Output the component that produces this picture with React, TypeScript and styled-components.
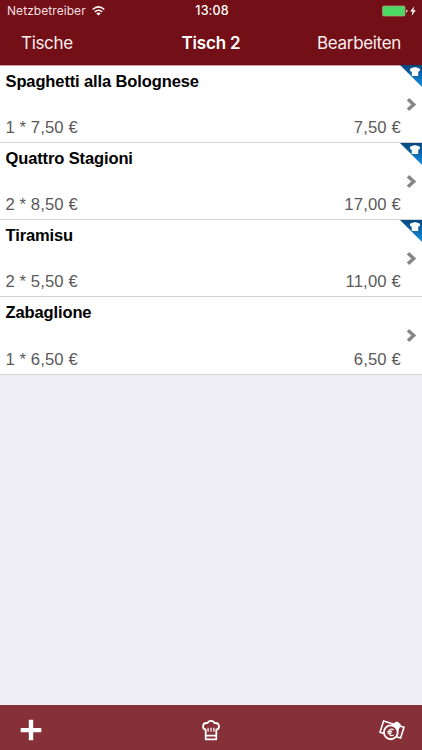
import React from "react";
import styled, { createGlobalStyle } from "styled-components";

const GlobalStyle = createGlobalStyle`
  * { box-sizing: border-box; }
  body { margin: 0; background: #efeff4; }
`;

const Screen = styled.div`
  display: flex;
  flex-direction: column;
  width: 422px;
  height: 750px;
  overflow: hidden;
  background: #efeef4;
  font-family: "Liberation Sans", Arial, sans-serif;
`;

const Header = styled.header`
  height: 66px;
  flex: none;
  border-bottom: 1px solid #d2a0a4;
  background: #730f17;
  color: #fff;
  font-family: Inter, sans-serif;
`;

const StatusBar = styled.div`
  display: grid;
  grid-template-columns: 1fr auto 1fr;
  align-items: center;
  height: 22px;
  padding: 0 5px 0 7px;
  font-size: 12px;
  line-height: 22px;
`;

const Carrier = styled.div`
  display: flex;
  align-items: center;
  gap: 6px;
  color: #f3dfe0;
  letter-spacing: 0.06px;
`;

const Clock = styled.div`
  font-weight: 500;
  font-size: 12.5px;
  letter-spacing: 0.1px;
`;

const Power = styled.div`
  display: flex;
  justify-content: flex-end;
  align-items: center;
`;

const NavBar = styled.nav`
  display: grid;
  grid-template-columns: 1fr auto 1fr;
  height: 43px;
  padding: 0 21px;
  line-height: 43px;
`;

const NavButton = styled.button<{ $end?: boolean }>`
  padding: 0;
  border: 0;
  background: none;
  color: #fbeeee;
  font: inherit;
  font-size: 17px;
  text-align: ${(p) => (p.$end ? "right" : "left")};
  letter-spacing: -0.32px;
`;

const Title = styled.h1`
  margin: 0;
  font-size: 17px;
  font-weight: 600;
  letter-spacing: -0.2px;
`;

const OrderList = styled.ul`
  flex: 1;
  margin: 0;
  padding: 0;
  list-style: none;
`;

const SentBadge = styled.svg`
  position: absolute;
  top: 0;
  right: 0;
`;

const OrderRow = styled.li`
  position: relative;
  display: flex;
  flex-direction: column;
  justify-content: space-between;
  height: 77.15px;
  padding: 6px 21px 5px 5.5px;
  border-bottom: 1px solid #d3d3d6;
  background: #fff;

  &:first-child ${SentBadge} {
    top: -1px;
  }
`;

const Dish = styled.div`
  color: #000;
  font-size: 16.5px;
  font-weight: 700;
  line-height: 19px;
  letter-spacing: -0.12px;
`;

const Amounts = styled.div`
  display: flex;
  justify-content: space-between;
  color: #5a5a5a;
  font-size: 16.7px;
  line-height: 19px;
  letter-spacing: 0.08px;
`;

const Total = styled.span`
  letter-spacing: 0.15px;
`;

const Chevron = styled.svg`
  position: absolute;
  top: 31px;
  right: 5px;
`;

const Toolbar = styled.footer`
  display: grid;
  grid-template-columns: 1fr auto 1fr;
  align-items: center;
  flex: none;
  height: 45px;
  padding: 4px 17px 0 17px;
  background: #863138;
`;

const ToolButton = styled.button<{ $align: string }>`
  display: flex;
  justify-content: ${(p) => p.$align};
  padding: 0;
  border: 0;
  background: none;
`;

const orders = [
  { name: "Spaghetti alla Bolognese", line: "1 * 7,50 €", total: "7,50 €", sent: true },
  { name: "Quattro Stagioni", line: "2 * 8,50 €", total: "17,00 €", sent: true },
  { name: "Tiramisu", line: "2 * 5,50 €", total: "11,00 €", sent: true },
  { name: "Zabaglione", line: "1 * 6,50 €", total: "6,50 €", sent: false },
];

const WifiIcon = () => (
  <svg width="13" height="10" viewBox="0 0 13 10" fill="none" stroke="#fff" strokeWidth="1.6">
    <path d="M.7 3.5Q6.5-1.7 12.3 3.5M2.8 5.9Q6.5 2.6 10.2 5.9" />
    <path d="M6.5 9.6 4.3 7.4Q6.5 5.8 8.7 7.4Z" fill="#fff" stroke="none" />
  </svg>
);

const BatteryIcon = () => (
  <svg width="35" height="12" viewBox="0 0 35 12">
    <rect x=".5" y="1" width="22.5" height="10" rx="1.2" fill="#4cd964" stroke="#a99a78" strokeWidth=".8" />
    <path d="M24 4.4q1.6.1 1.6 1.6T24 7.6z" fill="#e8c9cb" />
    <path d="M32.2 1.2 28.2 6.5h2.3l-.8 4.3 4.1-5.5h-2.4z" fill="#fff" />
  </svg>
);

const Badge = () => (
  <SentBadge width="22" height="22" viewBox="0 0 22 22">
    <defs>
      <linearGradient id="badge" x1="0" y1="0" x2="0" y2="1">
        <stop offset="0" stopColor="#07477c" />
        <stop offset="1" stopColor="#1191e8" />
      </linearGradient>
    </defs>
    <path d="M0 0H22V22Z" fill="url(#badge)" />
    <path
      d="M11.8 11V6.8C9.4 6.6 9.3 2.9 12.1 3.1 13 1.9 17 1.9 17.9 3.1 20.7 2.9 20.6 6.6 18.2 6.8V11z"
      fill="#fff"
    />
  </SentBadge>
);

const PlusIcon = () => (
  <svg width="28" height="22" viewBox="-3 0 28 22">
    <path d="M8.8 .8h4.4v8.1h8.1v4.3h-8.1v8.1H8.8v-8.1H.7v-4.3h8.1z" fill="#fff" />
  </svg>
);

const ChefHatIcon = () => (
  <svg width="20" height="22" viewBox="0 0 20 22" fill="none" stroke="#fff" strokeWidth="1.8" strokeLinejoin="round">
    <path d="M4.7 20.3V10.7C.4 9.4 1.6 3.2 6.4 4.1 7.6 1 12.4 1 13.6 4.1c4.8-.9 6 5.3 1.7 6.6v9.6zM4.7 16.7h10.6" />
    <path d="M7.1 8.7v4M10 8.7v4M12.9 8.7v4" strokeWidth="1.2" />
  </svg>
);

const PaymentIcon = () => (
  <svg width="26" height="22" viewBox="0 0 26 22" fill="none" stroke="#fff" strokeWidth="1.6">
    <path d="M4.6 14.4 1 13.2 4.6 2 14.2 5M20.6 7 25 8.2 21.6 18.9l-4.2-1.2" />
    <path d="M12.6 5.6Q14.4 3.8 15.4 4.1C16.4 2.2 19.4 2.1 20.4 4.3 22.4 5.2 22.3 8 20.4 8.9L19.2 12.2Q16.5 7.8 12.6 5.6z" fill="#fff" stroke="none" />
    <circle cx="11.8" cy="13.3" r="6.9" strokeWidth="1.9" />
    <path d="M14.6 10.7C11.7 9 10 10.9 10 13.3S11.7 17.6 14.6 15.9M8.4 12.4h4.7M8.4 14.2h4.4" strokeWidth="1.2" />
  </svg>
);

export default function App() {
  return (
    <>
      <GlobalStyle />
      <Screen>
        <Header>
          <StatusBar>
            <Carrier>
              <span>Netzbetreiber</span>
              <WifiIcon />
            </Carrier>
            <Clock>13:08</Clock>
            <Power>
              <BatteryIcon />
            </Power>
          </StatusBar>
          <NavBar>
            <NavButton>Tische</NavButton>
            <Title>Tisch 2</Title>
            <NavButton $end>Bearbeiten</NavButton>
          </NavBar>
        </Header>
        <OrderList>
          {orders.map((o) => (
            <OrderRow key={o.name}>
              <Dish>{o.name}</Dish>
              <Amounts>
                <span>{o.line}</span>
                <Total>{o.total}</Total>
              </Amounts>
              {o.sent && <Badge />}
              <Chevron width="11" height="15" viewBox="0 0 11 15" fill="none" stroke="#858585" strokeWidth="3.4">
                <path d="M2 2.2 7.7 7.5 2 12.8" />
              </Chevron>
            </OrderRow>
          ))}
        </OrderList>
        <Toolbar>
          <ToolButton $align="flex-start" aria-label="Hinzufügen">
            <PlusIcon />
          </ToolButton>
          <ToolButton $align="center" aria-label="Küche">
            <ChefHatIcon />
          </ToolButton>
          <ToolButton $align="flex-end" aria-label="Bezahlen">
            <PaymentIcon />
          </ToolButton>
        </Toolbar>
      </Screen>
    </>
  );
}
